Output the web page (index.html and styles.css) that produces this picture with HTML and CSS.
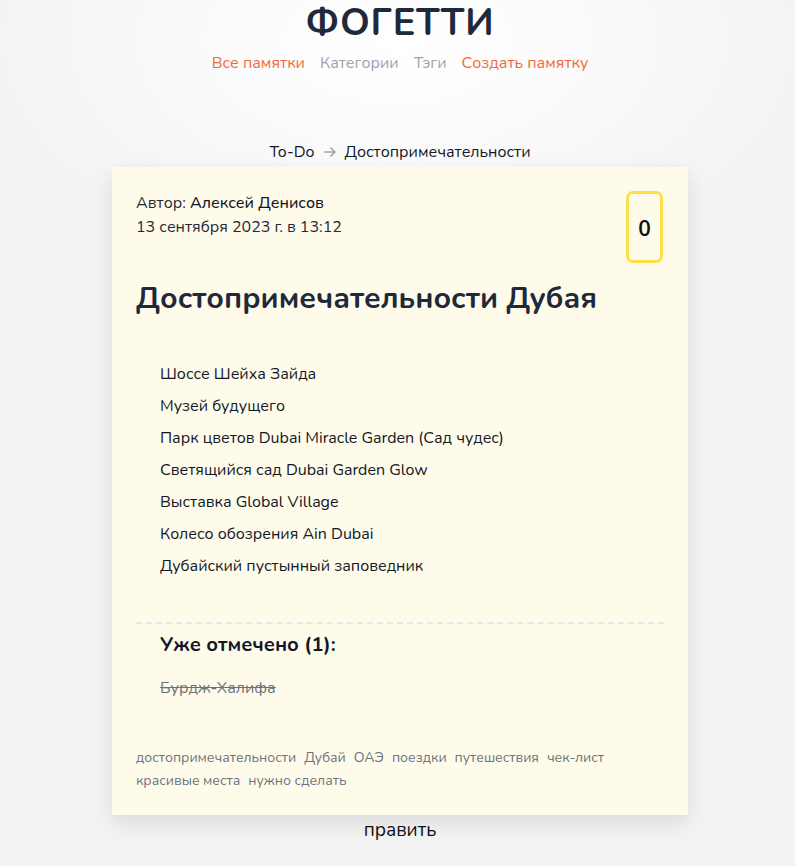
FILE: index.html
```html
<!DOCTYPE html>
<html lang="ru">
<head>
<meta charset="utf-8">
<title>Фогетти</title>
<link rel="stylesheet" href="styles.css">
</head>
<body>
<header class="header">
  <div class="logo">ФОГЕТТИ</div>
  <nav class="nav">
    <a class="nav-link accent" href="#">Все памятки</a>
    <a class="nav-link muted" href="#">Категории</a>
    <a class="nav-link muted" href="#">Тэги</a>
    <a class="nav-link accent" href="#">Создать памятку</a>
  </nav>
</header>
<main class="main">
  <div class="crumbs">
    <span>To-Do</span>
    <svg class="crumb-arrow" width="14" height="14" viewBox="0 0 14 14" fill="none" stroke="#9ca3af" stroke-width="1.6" stroke-linecap="round" stroke-linejoin="round"><path d="M2 7h10M8 3l4 4-4 4"/></svg>
    <span>Достопримечательности</span>
  </div>
  <article class="card">
    <div class="card-head">
      <div class="meta">
        <div>Автор: <span class="author">Алексей Денисов</span></div>
        <div>13 сентября 2023 г. в 13:12</div>
      </div>
      <div class="badge">0</div>
    </div>
    <h1 class="title">Достопримечательности Дубая</h1>
    <ul class="items">
      <li>Шоссе Шейха Зайда</li>
      <li>Музей будущего</li>
      <li>Парк цветов Dubai Miracle Garden (Сад чудес)</li>
      <li>Светящийся сад Dubai Garden Glow</li>
      <li>Выставка Global Village</li>
      <li>Колесо обозрения Ain Dubai</li>
      <li>Дубайский пустынный заповедник</li>
    </ul>
    <div class="done">
      <h2 class="done-title">Уже отмечено (1):</h2>
      <ul class="done-items">
        <li>Бурдж-Халифа</li>
      </ul>
    </div>
    <div class="tags">
      <a href="#">достопримечательности</a>
      <a href="#">Дубай</a>
      <a href="#">ОАЭ</a>
      <a href="#">поездки</a>
      <a href="#">путешествия</a>
      <a href="#">чек-лист</a>
      <a href="#">красивые места</a>
      <a href="#">нужно сделать</a>
    </div>
  </article>
  <a class="edit" href="#">править</a>
</main>
</body>
</html>
```
FILE: styles.css
```css
* { box-sizing: border-box; }
html, body { height: 100%; }
body {
  margin: 0;
  padding-left: 5px;
  font-family: "Nunito", "Lato", "Noto Sans", sans-serif;
  color: #111827;
  background: radial-gradient(ellipse 420px 240px at 50% 40px, #ffffff 0%, #fbfbfb 40%, #f3f3f3 100%) #f3f3f3;
  min-height: 866px;
}
a { text-decoration: none; color: inherit; }
.header {
  display: flex;
  flex-direction: column;
  align-items: center;
  padding-top: 0;
}
.logo {
  font-size: 38px;
  line-height: 46px;
  font-weight: 700;
  letter-spacing: 0.8px;
  color: #1e293b;
}
.nav {
  display: flex;
  gap: 15px;
  margin-top: 7px;
  font-size: 16px;
  line-height: 20px;
}
.accent { color: #f06a3f; }
.muted { color: #9ca3af; }
.main {
  display: flex;
  flex-direction: column;
  align-items: center;
  margin-top: 69px;
}
.crumbs {
  display: flex;
  align-items: center;
  gap: 8px;
  font-size: 16px;
  line-height: 20px;
  color: #111827;
  height: 20px;
}
.card {
  width: 576px;
  margin-top: 5px;
  background: #fffbea;
  box-shadow: 0 8px 20px rgba(0,0,0,0.10);
  padding: 24px 24px 24px 24px;
}
.card-head {
  display: flex;
  justify-content: space-between;
  align-items: flex-start;
}
.meta {
  font-size: 16px;
  line-height: 24px;
  color: #1f2937;
}
.author { color: #111827; font-weight: 500; }
.badge {
  width: 37px;
  height: 72px;
  margin-right: 1px;
  border: 3px solid #fde047;
  border-radius: 7px;
  display: flex;
  align-items: center;
  justify-content: center;
  font-family: "Open Sans", sans-serif;
  font-size: 22px;
  font-weight: 600;
  color: #111;
}
.title {
  margin: 18px 0 0;
  font-size: 30px;
  line-height: 36px;
  font-weight: 700;
  color: #1e293b;
}
.items {
  list-style: none;
  margin: 47px 0 0;
  padding: 0 0 0 24px;
  display: flex;
  flex-direction: column;
  gap: 12px;
  font-size: 16px;
  line-height: 20px;
  color: #111827;
}
.done {
  margin-top: 46px;
  border-top: 2px dashed #e5e7eb;
  padding: 8px 24px 0;
}
.done-title {
  margin: 0;
  font-size: 20px;
  line-height: 26px;
  font-weight: 700;
  color: #111827;
}
.done-items {
  list-style: none;
  margin: 20px 0 0;
  padding: 0;
  font-size: 16px;
  line-height: 20px;
  color: #6b7280;
  text-decoration: line-through;
}
.tags {
  margin-top: 50px;
  display: flex;
  flex-wrap: wrap;
  column-gap: 8px;
  row-gap: 3px;
  max-width: 500px;
  font-size: 14px;
  line-height: 20px;
  color: #6b7280;
}
.edit {
  margin-top: 3px;
  font-size: 19px;
  line-height: 24px;
  color: #111;
}
```
